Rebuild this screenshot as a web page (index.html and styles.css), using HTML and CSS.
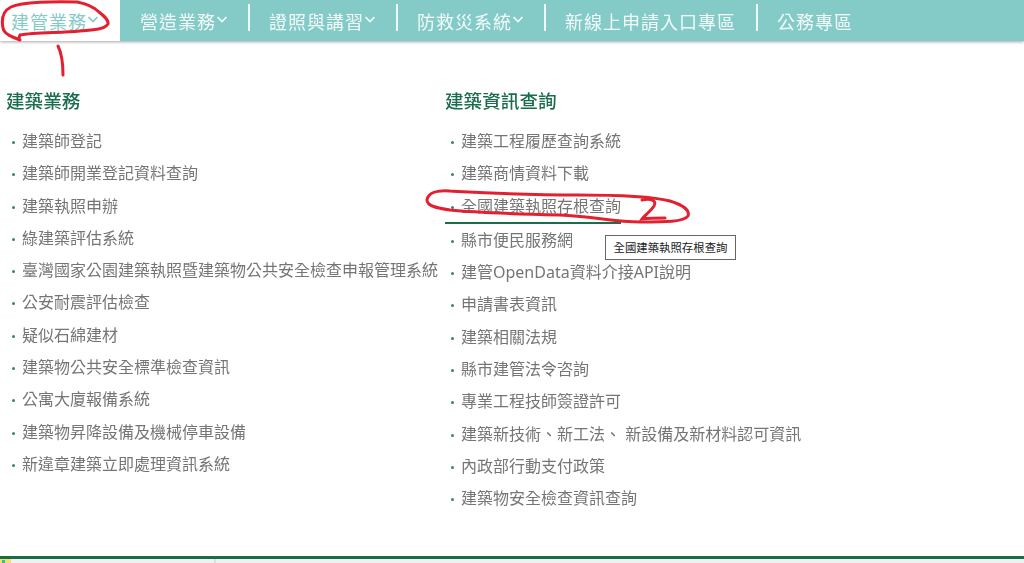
FILE: index.html
```html
<!DOCTYPE html>
<html lang="zh-Hant">
	<head>
		<title>建管業務</title>
		<link rel="stylesheet" href="styles.css">
	</head>
	<body>
		<nav class="topnav">
			<a class="topnav-item active" href="#">建管業務<svg class="chevron" viewBox="0 0 12 7"><path d="M1.5 1l4.5 4.5L10.500 1"/></svg></a>
			<a class="topnav-item" href="#">營造業務<svg class="chevron" viewBox="0 0 12 7"><path d="M1.5 1l4.5 4.5L10.500 1"/></svg></a>
			<a class="topnav-item" href="#">證照與講習<svg class="chevron" viewBox="0 0 12 7"><path d="M1.5 1l4.5 4.5L10.500 1"/></svg></a>
			<a class="topnav-item" href="#">防救災系統<svg class="chevron" viewBox="0 0 12 7"><path d="M1.5 1l4.5 4.5L10.500 1"/></svg></a>
			<a class="topnav-item" href="#">新線上申請入口專區</a>
			<a class="topnav-item" href="#">公務專區</a>
		</nav>
		<main class="menu">
			<section class="menu-col left">
				<h2>建築業務</h2>
				<ul>
					<li>建築師登記</li>
					<li>建築師開業登記資料查詢</li>
					<li>建築執照申辦</li>
					<li>綠建築評估系統</li>
					<li>臺灣國家公園建築執照暨建築物公共安全檢查申報管理系統</li>
					<li>公安耐震評估檢查</li>
					<li>疑似石綿建材</li>
					<li>建築物公共安全標準檢查資訊</li>
					<li>公寓大廈報備系統</li>
					<li>建築物昇降設備及機械停車設備</li>
					<li>新違章建築立即處理資訊系統</li>
				</ul>
			</section>
			<section class="menu-col">
				<h2>建築資訊查詢</h2>
				<ul>
					<li>建築工程履歷查詢系統</li>
					<li>建築商情資料下載</li>
					<li class="hover">全國建築執照存根查詢</li>
					<li>縣市便民服務網</li>
					<li>建管OpenData資料介接API說明</li>
					<li>申請書表資訊</li>
					<li>建築相關法規</li>
					<li>縣市建管法令咨詢</li>
					<li>專業工程技師簽證許可</li>
					<li>建築新技術、新工法、 新設備及新材料認可資訊</li>
					<li>內政部行動支付政策</li>
					<li>建築物安全檢查資訊查詢</li>
				</ul>
			</section>
		</main>
		<div class="tooltip">全國建築執照存根查詢</div>
		<svg class="marks" viewBox="0 0 1024 563">
			<path d="M20 40C12 37 4 34 3 28C1 18 3 11 11 7C22 2 55 1 77 2C88 4 95 8 99 12C104 16 109 20 108 24C105 29 95 30 80 31C60 33 35 32 20 35L19 38"/>
			<path d="M58 46C61 52 63 64 63 75"/>
			<path d="M450 210C437 208 427 206 427 200C428 193 437 190 450 191C470 192 520 195 577 195C610 195 650 196 670 201C683 205 690 210 688 216C684 222 665 222 640 222C615 222 590 216 560 215C520 214 480 213 450 210"/>
			<path d="M642 200C652 198 657 201 654 206C650 212 644 216 642 219C650 218 660 218 665 218"/>
		</svg>
		<footer class="taskbar">
			<span class="taskbar-icon"></span>
			<span class="taskbar-sep"></span>
		</footer>
	</body>
</html>
```

FILE: styles.css
```css
* {
	box-sizing: border-box;
	font-family: "Noto Sans", "Noto Sans CJK TC", sans-serif;
}

html, body {
	height: 100%;
}

body {
	position: relative;
	display: flex;
	flex-direction: column;
	margin: 0;
	overflow: hidden;
	background-color: #fff;
}

.topnav {
	display: flex;
	align-items: center;
	height: 41px;
	background-color: #84cbc8;
	box-shadow: 0 1px 3px rgba(0, 0, 0, 0.35);
	filter: blur(0.3px);
}

.topnav-item {
	display: flex;
	align-items: center;
	position: relative;
	height: 41px;
	padding: 0 20px 0 21px;
	color: #f2fafa;
	font-size: 18px;
	letter-spacing: 1px;
	text-decoration: none;
	white-space: nowrap;
}
.topnav-item + .topnav-item {
	padding-left: 20px;
}
.topnav-item + .topnav-item + .topnav-item {
	padding-left: 21px;
}
.topnav-item + .topnav-item + .topnav-item:before {
	content: "";
	position: absolute;
	left: 0;
	top: 4px;
	height: 27px;
	border-left: 2px solid #eef8f7;
}
.topnav-item.active {
	padding-left: 11px;
	padding-right: 0;
	width: 120px;
	background-color: #fff;
	color: #84cbc8;
}

.chevron {
	width: 12px;
	height: 7px;
	margin-top: -3px;
	fill: none;
	stroke: currentColor;
	stroke-width: 1.7;
}

.menu {
	display: flex;
	flex: 1;
	padding: 47px 0 0 6px;
	filter: blur(0.3px);
}

.menu-col.left {
	width: 439px;
}

.menu-col h2 {
	margin: 0 0 11px;
	color: #1b6e4c;
	font-size: 18.6px;
	font-weight: 500;
	line-height: 26px;
}

.menu-col ul {
	margin: 0;
	padding: 0;
	list-style: none;
}
.menu-col li {
	position: relative;
	width: fit-content;
	padding-left: 16px;
	color: #757575;
	font-size: 16px;
	line-height: 32.3px;
	white-space: nowrap;
}
.menu-col li:before {
	content: "";
	position: absolute;
	left: 6px;
	top: 16px;
	width: 3px;
	height: 3px;
	border-radius: 50%;
	background-color: #2f8a63;
}
.menu-col li.hover {
	border-bottom: 2px solid #1b6e4c;
}

.tooltip {
	position: absolute;
	left: 605px;
	top: 235px;
	padding: 0 7.500px;
	border: 1px solid #666;
	background-color: #fff;
	color: #222;
	font-size: 11.4px;
	line-height: 23px;
	white-space: nowrap;
}

.marks {
	position: absolute;
	left: 0;
	top: 0;
	width: 1024px;
	height: 563px;
	pointer-events: none;
	fill: none;
	stroke: #e3202f;
	stroke-width: 3;
	stroke-linecap: round;
}

.taskbar {
	display: flex;
	height: 7px;
	border-top: 3px solid #1a6b48;
	background-color: #f0f0f0;
}

.taskbar-icon {
	width: 11px;
	background-color: #f3df70;
}
.taskbar-icon:before {
	content: "";
	display: block;
	margin: 1px 0 0 2px;
	width: 3px;
	height: 3px;
	background-color: #2fc48d;
}

.taskbar-sep {
	margin-left: 203px;
	width: 2px;
	background-color: #ddd;
}
```
